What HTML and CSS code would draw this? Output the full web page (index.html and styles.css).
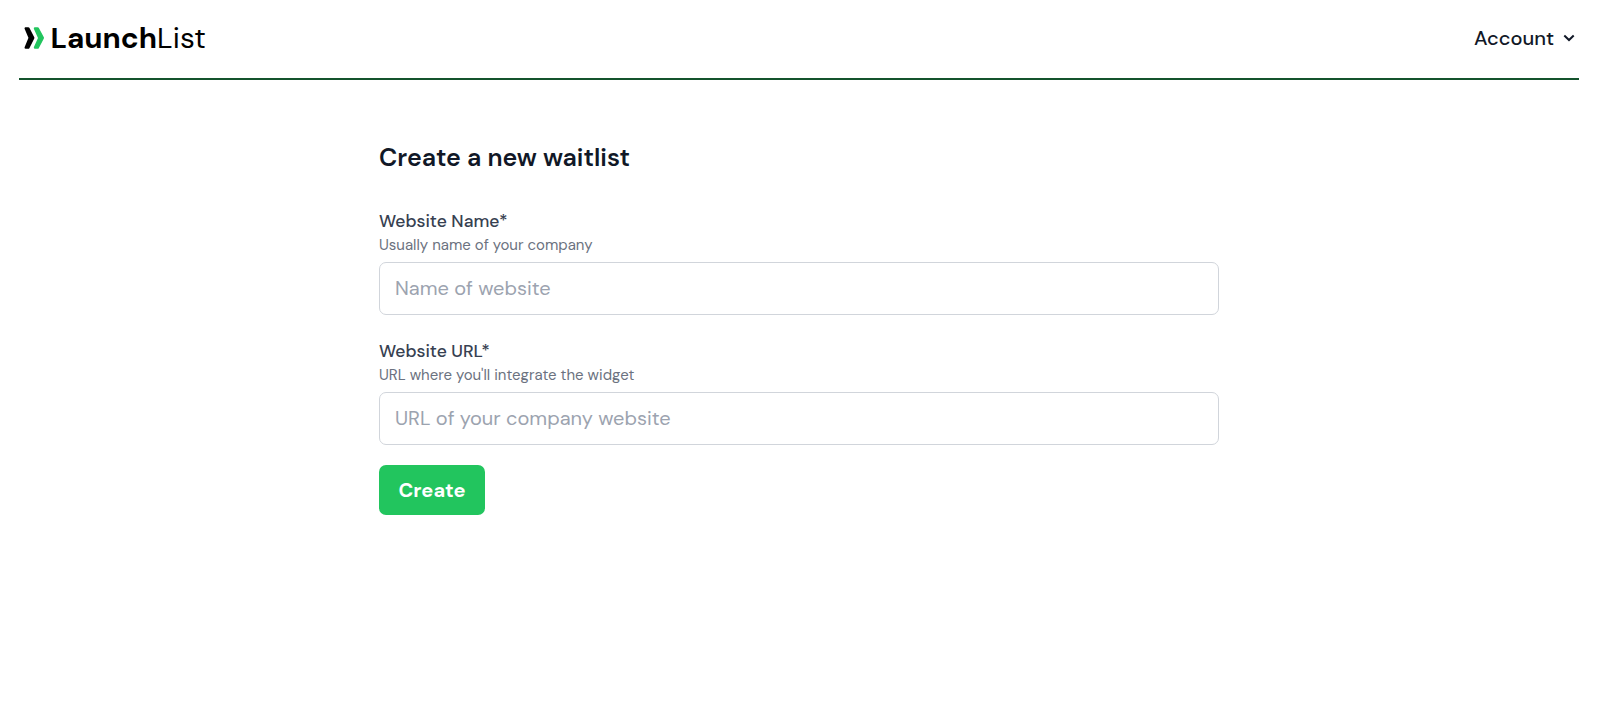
FILE: index.html
```
<!DOCTYPE html>
<html lang="en">
<head>
    <meta charset="UTF-8">
    <meta name="viewport" content="width=device-width, initial-scale=1.0">
    <title>LaunchList</title>
    <link rel="stylesheet" href="styles.css">
</head>
<body>
    <header class="navbar">
        <a href="#" class="logo">
            <svg class="logo-mark" width="21" height="22" viewBox="0 0 21 22" stroke-width="2.4" stroke-linejoin="round">
                <path d="M11 1.4H13.7L18.8 10.9L13.7 20.6H11L15.3 10.9Z" fill="#22c55e" stroke="#22c55e"/>
                <path d="M1.7 1.4H4.3L9.2 10.9L4.3 20.6H1.7L5.7 10.9Z" fill="#000" stroke="#000"/>
            </svg>
            <span class="logo-bold">Launch</span><span class="logo-light">List</span>
        </a>
        <button type="button" class="account">
            <span>Account</span>
            <svg width="12" height="8" viewBox="0 0 12 8" fill="none" stroke="#111827" stroke-width="2">
                <path d="M1.3 1.5L6 6L10.7 1.5"/>
            </svg>
        </button>
    </header>

    <main class="content">
        <h1>Create a new waitlist</h1>
        <form class="waitlist-form">
            <div class="field">
                <label for="name">Website Name*</label>
                <p>Usually name of your company</p>
                <input type="text" id="name" placeholder="Name of website">
            </div>
            <div class="field">
                <label for="url">Website URL*</label>
                <p>URL where you'll integrate the widget</p>
                <input type="text" id="url" placeholder="URL of your company website">
            </div>
            <button type="button" class="create">Create</button>
        </form>
    </main>
</body>
</html>
```
FILE: styles.css
```
* {
    margin: 0;
    padding: 0;
    box-sizing: border-box;
}

html {
    font-size: 20px;
}

body {
    font-family: "DM Sans", "Inter", sans-serif;
    color: #111827;
    background: #fff;
}

.navbar {
    display: flex;
    justify-content: space-between;
    height: 80px;
    margin: 0 18px 0 19px;
    padding: 18px 4px 20px 5px;
    border-bottom: 2px solid #14532d;
}

.logo {
    display: flex;
    align-items: center;
    height: 39px;
    color: #000;
    font-size: 29.6px;
    line-height: 38px;
    text-decoration: none;
}

.logo-mark {
    margin-right: 5.5px;
}

.logo-bold {
    font-weight: 700;
}

.logo-light {
    font-weight: 400;
    letter-spacing: 0.1px;
}

.account {
    display: flex;
    align-items: center;
    gap: 9px;
    height: 40px;
    border: none;
    background: none;
    color: #111827;
    font-family: inherit;
    font-size: 1rem;
    font-weight: 500;
    cursor: pointer;
}

.content {
    margin: 0 378px 0 379px;
    padding-top: 60px;
}

h1 {
    height: 35px;
    margin-bottom: 33px;
    font-size: 1.25rem;
    line-height: 35px;
    font-weight: 600;
}

.field {
    height: 130px;
}

.field label {
    display: block;
    height: 26px;
    color: #374151;
    font-size: 0.875rem;
    line-height: 26px;
    font-weight: 500;
}

.field p {
    height: 23px;
    margin-bottom: 5px;
    color: #6b7280;
    font-size: 0.75rem;
    line-height: 23px;
}

.field input {
    display: block;
    width: 100%;
    height: 53px;
    padding: 0 15px 2px;
    border: 1px solid #d1d5db;
    border-radius: 7px;
    font-family: inherit;
    font-size: 1rem;
}

.field input::placeholder {
    color: #9ca3af;
}

.create {
    display: block;
    width: 106px;
    height: 50px;
    margin-top: -3px;
    border: none;
    border-radius: 7px;
    background: #22c55e;
    color: #fff;
    font-family: inherit;
    font-size: 1rem;
    font-weight: 700;
    cursor: pointer;
}
```
